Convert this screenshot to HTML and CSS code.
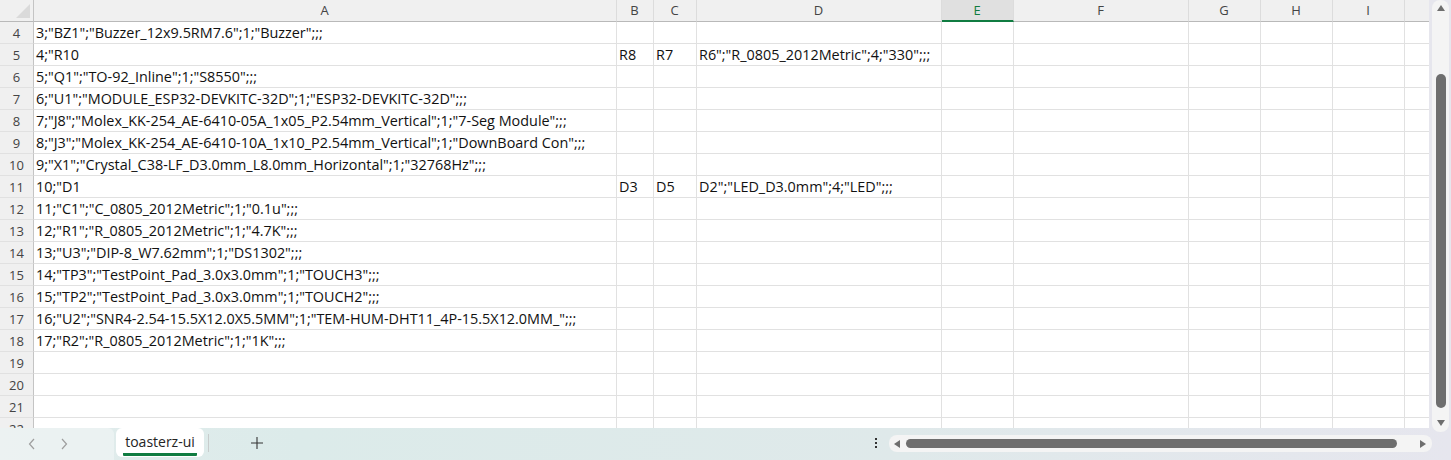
FILE: index.html
```html
<!DOCTYPE html>
<html lang="en">
<head>
<meta charset="utf-8">
<title>toasterz-ui</title>
<link rel="stylesheet" href="styles.css">
</head>
<body>
<div class="app">
  <div class="sheet">
    <div class="row head">
      <div class="cell corner"><span class="tri"></span></div>
      <div class="cell">A</div><div class="cell">B</div><div class="cell">C</div><div class="cell">D</div>
      <div class="cell sel">E</div><div class="cell">F</div><div class="cell">G</div><div class="cell">H</div><div class="cell">I</div><div class="cell last"></div>
    </div>
    <div class="row"><div class="cell rh">4</div><div class="cell">3;"BZ1";"Buzzer_12x9.5RM7.6";1;"Buzzer";;;</div><div class="cell"></div><div class="cell"></div><div class="cell"></div><div class="cell"></div><div class="cell"></div><div class="cell"></div><div class="cell"></div><div class="cell"></div><div class="cell last"></div></div>
    <div class="row"><div class="cell rh">5</div><div class="cell">4;"R10</div><div class="cell">R8</div><div class="cell">R7</div><div class="cell">R6";"R_0805_2012Metric";4;"330";;;</div><div class="cell"></div><div class="cell"></div><div class="cell"></div><div class="cell"></div><div class="cell"></div><div class="cell last"></div></div>
    <div class="row"><div class="cell rh">6</div><div class="cell">5;"Q1";"TO-92_Inline";1;"S8550";;;</div><div class="cell"></div><div class="cell"></div><div class="cell"></div><div class="cell"></div><div class="cell"></div><div class="cell"></div><div class="cell"></div><div class="cell"></div><div class="cell last"></div></div>
    <div class="row"><div class="cell rh">7</div><div class="cell">6;"U1";"MODULE_ESP32-DEVKITC-32D";1;"ESP32-DEVKITC-32D";;;</div><div class="cell"></div><div class="cell"></div><div class="cell"></div><div class="cell"></div><div class="cell"></div><div class="cell"></div><div class="cell"></div><div class="cell"></div><div class="cell last"></div></div>
    <div class="row"><div class="cell rh">8</div><div class="cell">7;"J8";"Molex_KK-254_AE-6410-05A_1x05_P2.54mm_Vertical";1;"7-Seg Module";;;</div><div class="cell"></div><div class="cell"></div><div class="cell"></div><div class="cell"></div><div class="cell"></div><div class="cell"></div><div class="cell"></div><div class="cell"></div><div class="cell last"></div></div>
    <div class="row"><div class="cell rh">9</div><div class="cell">8;"J3";"Molex_KK-254_AE-6410-10A_1x10_P2.54mm_Vertical";1;"DownBoard Con";;;</div><div class="cell"></div><div class="cell"></div><div class="cell"></div><div class="cell"></div><div class="cell"></div><div class="cell"></div><div class="cell"></div><div class="cell"></div><div class="cell last"></div></div>
    <div class="row"><div class="cell rh">10</div><div class="cell">9;"X1";"Crystal_C38-LF_D3.0mm_L8.0mm_Horizontal";1;"32768Hz";;;</div><div class="cell"></div><div class="cell"></div><div class="cell"></div><div class="cell"></div><div class="cell"></div><div class="cell"></div><div class="cell"></div><div class="cell"></div><div class="cell last"></div></div>
    <div class="row"><div class="cell rh">11</div><div class="cell">10;"D1</div><div class="cell">D3</div><div class="cell">D5</div><div class="cell">D2";"LED_D3.0mm";4;"LED";;;</div><div class="cell"></div><div class="cell"></div><div class="cell"></div><div class="cell"></div><div class="cell"></div><div class="cell last"></div></div>
    <div class="row"><div class="cell rh">12</div><div class="cell">11;"C1";"C_0805_2012Metric";1;"0.1u";;;</div><div class="cell"></div><div class="cell"></div><div class="cell"></div><div class="cell"></div><div class="cell"></div><div class="cell"></div><div class="cell"></div><div class="cell"></div><div class="cell last"></div></div>
    <div class="row"><div class="cell rh">13</div><div class="cell">12;"R1";"R_0805_2012Metric";1;"4.7K";;;</div><div class="cell"></div><div class="cell"></div><div class="cell"></div><div class="cell"></div><div class="cell"></div><div class="cell"></div><div class="cell"></div><div class="cell"></div><div class="cell last"></div></div>
    <div class="row"><div class="cell rh">14</div><div class="cell">13;"U3";"DIP-8_W7.62mm";1;"DS1302";;;</div><div class="cell"></div><div class="cell"></div><div class="cell"></div><div class="cell"></div><div class="cell"></div><div class="cell"></div><div class="cell"></div><div class="cell"></div><div class="cell last"></div></div>
    <div class="row"><div class="cell rh">15</div><div class="cell">14;"TP3";"TestPoint_Pad_3.0x3.0mm";1;"TOUCH3";;;</div><div class="cell"></div><div class="cell"></div><div class="cell"></div><div class="cell"></div><div class="cell"></div><div class="cell"></div><div class="cell"></div><div class="cell"></div><div class="cell last"></div></div>
    <div class="row"><div class="cell rh">16</div><div class="cell">15;"TP2";"TestPoint_Pad_3.0x3.0mm";1;"TOUCH2";;;</div><div class="cell"></div><div class="cell"></div><div class="cell"></div><div class="cell"></div><div class="cell"></div><div class="cell"></div><div class="cell"></div><div class="cell"></div><div class="cell last"></div></div>
    <div class="row"><div class="cell rh">17</div><div class="cell">16;"U2";"SNR4-2.54-15.5X12.0X5.5MM";1;"TEM-HUM-DHT11_4P-15.5X12.0MM_";;;</div><div class="cell"></div><div class="cell"></div><div class="cell"></div><div class="cell"></div><div class="cell"></div><div class="cell"></div><div class="cell"></div><div class="cell"></div><div class="cell last"></div></div>
    <div class="row"><div class="cell rh">18</div><div class="cell">17;"R2";"R_0805_2012Metric";1;"1K";;;</div><div class="cell"></div><div class="cell"></div><div class="cell"></div><div class="cell"></div><div class="cell"></div><div class="cell"></div><div class="cell"></div><div class="cell"></div><div class="cell last"></div></div>
    <div class="row"><div class="cell rh">19</div><div class="cell"></div><div class="cell"></div><div class="cell"></div><div class="cell"></div><div class="cell"></div><div class="cell"></div><div class="cell"></div><div class="cell"></div><div class="cell"></div><div class="cell last"></div></div>
    <div class="row"><div class="cell rh">20</div><div class="cell"></div><div class="cell"></div><div class="cell"></div><div class="cell"></div><div class="cell"></div><div class="cell"></div><div class="cell"></div><div class="cell"></div><div class="cell"></div><div class="cell last"></div></div>
    <div class="row"><div class="cell rh">21</div><div class="cell"></div><div class="cell"></div><div class="cell"></div><div class="cell"></div><div class="cell"></div><div class="cell"></div><div class="cell"></div><div class="cell"></div><div class="cell"></div><div class="cell last"></div></div>
    <div class="row"><div class="cell rh">22</div><div class="cell"></div><div class="cell"></div><div class="cell"></div><div class="cell"></div><div class="cell"></div><div class="cell"></div><div class="cell"></div><div class="cell"></div><div class="cell"></div><div class="cell last"></div></div>
  </div>

  <div class="vscroll">
    <div class="vtrack">
      <svg class="arrow-up" width="8" height="6" viewBox="0 0 8 6"><path d="M4 0 L8 6 L0 6 Z" fill="#6e6e6e"/></svg>
      <div class="vthumb-wrap"><div class="vthumb"></div></div>
      <svg class="arrow-down" width="8" height="6" viewBox="0 0 8 6"><path d="M0 0 L8 0 L4 6 Z" fill="#6e6e6e"/></svg>
    </div>
  </div>

  <div class="tabbar">
    <div class="nav">
      <svg width="8" height="12" viewBox="0 0 8 12"><path d="M6 1 L1.5 6 L6 11" fill="none" stroke="#9e9e9e" stroke-width="1.2"/></svg>
      <svg width="8" height="12" viewBox="0 0 8 12"><path d="M2 1 L6.5 6 L2 11" fill="none" stroke="#9e9e9e" stroke-width="1.2"/></svg>
    </div>
    <div class="tab"><span class="tab-label">toasterz-ui</span></div>
    <div class="sep"></div>
    <div class="add">
      <svg width="12" height="12" viewBox="0 0 12 12"><path d="M6 0 V12 M0 6 H12" stroke="#333" stroke-width="1.1"/></svg>
    </div>
    <div class="spacer"></div>
    <div class="dots"><span></span><span></span><span></span></div>
    <div class="htrack">
      <svg width="6" height="8" viewBox="0 0 6 8"><path d="M6 0 L6 8 L0 4 Z" fill="#6e6e6e"/></svg>
      <div class="hthumb-wrap"><div class="hthumb"></div></div>
      <svg width="6" height="8" viewBox="0 0 6 8"><path d="M0 0 L6 4 L0 8 Z" fill="#6e6e6e"/></svg>
    </div>
  </div>
</div>
</body>
</html>
```

FILE: styles.css
```css
html, body {
  margin: 0;
  padding: 0;
}
body {
  width: 1451px;
  height: 460px;
  overflow: hidden;
  background: #ffffff;
  font-family: "Open Sans", "Noto Sans", sans-serif;
}
.app {
  display: grid;
  grid-template-columns: 1429px 22px;
  grid-template-rows: 428px 32px;
  width: 1451px;
  height: 460px;
}
.sheet {
  grid-column: 1;
  grid-row: 1;
  overflow: hidden;
  background: #fff;
}
.row {
  display: grid;
  grid-template-columns: 34px 583px 37px 43px 245px 72px 175px 72px 72px 72px 24px;
  height: 22px;
}
.cell {
  box-sizing: border-box;
  height: 22px;
  border-right: 1px solid #e1e1e1;
  border-bottom: 1px solid #e1e1e1;
  padding: 0 3px 0 2px;
  font-size: 14.4px;
  line-height: 22px;
  color: #111;
  white-space: nowrap;
  overflow: hidden;
}
.cell.last {
  border-right: none;
}
.head .cell {
  background: #f0f0f0;
  border-bottom: 1px solid #b9b9b9;
  border-right-color: #dcdcdc;
  text-align: center;
  font-size: 13px;
  line-height: 20px;
  color: #444;
}
.head .cell.sel {
  background: #e0e0e0;
  color: #107c41;
  border-bottom: 2px solid #107c41;
}
.head .cell.corner {
  position: relative;
  border-right-color: #c4c4c4;
}
.tri {
  position: absolute;
  right: 3px;
  bottom: 3px;
  width: 0;
  height: 0;
  border-left: 14px solid transparent;
  border-bottom: 14px solid #dadada;
}
.cell.rh {
  background: #f0f0f0;
  border-right-color: #c4c4c4;
  border-bottom-color: #e1e1e1;
  text-align: center;
  padding: 0;
  font-size: 13px;
  color: #444;
}

/* vertical scrollbar */
.vscroll {
  grid-column: 2;
  grid-row: 1;
  background: #e6e6ed;
  padding: 0 2px 0 3px;
  position: relative;
  z-index: 1;
}
.vtrack {
  height: 432px;
  background: #f4f4f4;
  border-radius: 8px;
  display: flex;
  flex-direction: column;
  align-items: center;
  padding: 5px 0 6px;
  box-sizing: border-box;
}
.vthumb-wrap {
  flex: 1;
  display: flex;
  flex-direction: column;
  padding: 63px 0 12px;
}
.vthumb {
  flex: 1;
  width: 10px;
  background: #6e6e6e;
  border-radius: 5px;
}

/* tab bar */
.tabbar {
  grid-column: 1 / 3;
  grid-row: 2;
  display: flex;
  align-items: stretch;
  background: linear-gradient(90deg, #e2ecec 0px, #dcebea 300px, #dfe9ea 900px, #e6e6ee 1451px);
}
.nav {
  width: 114px;
  display: flex;
  align-items: center;
  gap: 24px;
  padding-left: 28px;
  box-sizing: border-box;
  background: rgba(255, 255, 255, 0.35);
  border-top-right-radius: 6px;
  margin-right: 2px;
}
.tab {
  width: 88px;
  height: 29px;
  background: #ffffff;
  border-radius: 6px;
  display: flex;
  justify-content: center;
  align-items: flex-start;
}
.tab-label {
  font-size: 14px;
  line-height: 18px;
  margin-top: 5px;
  color: #242424;
  padding-bottom: 2px;
  border-bottom: 3px solid #107c41;
  border-radius: 1px;
  padding-left: 2px;
  padding-right: 2px;
}
.sep {
  width: 1px;
  background: #c8cccc;
  margin: 6px 0 8px 4px;
}
.add {
  width: 96px;
  display: flex;
  justify-content: center;
  align-items: center;
  padding-bottom: 2px;
}
.spacer {
  flex: 1;
}
.dots {
  width: 16px;
  display: flex;
  flex-direction: column;
  align-items: center;
  justify-content: center;
  gap: 2px;
  margin-right: 5px;
  padding-bottom: 2px;
}
.dots span {
  width: 2px;
  height: 2px;
  background: #333;
}
.htrack {
  width: 543px;
  height: 17px;
  margin: 7px 19px 0 0;
  background: #f4f4f4;
  border-radius: 8px;
  display: flex;
  align-items: center;
  padding: 0 6px 0 5px;
  box-sizing: border-box;
}
.hthumb-wrap {
  flex: 1;
  display: flex;
  padding: 0 23px 0 6px;
}
.hthumb {
  flex: 1;
  height: 9px;
  background: #6e6e6e;
  border-radius: 5px;
}
```
